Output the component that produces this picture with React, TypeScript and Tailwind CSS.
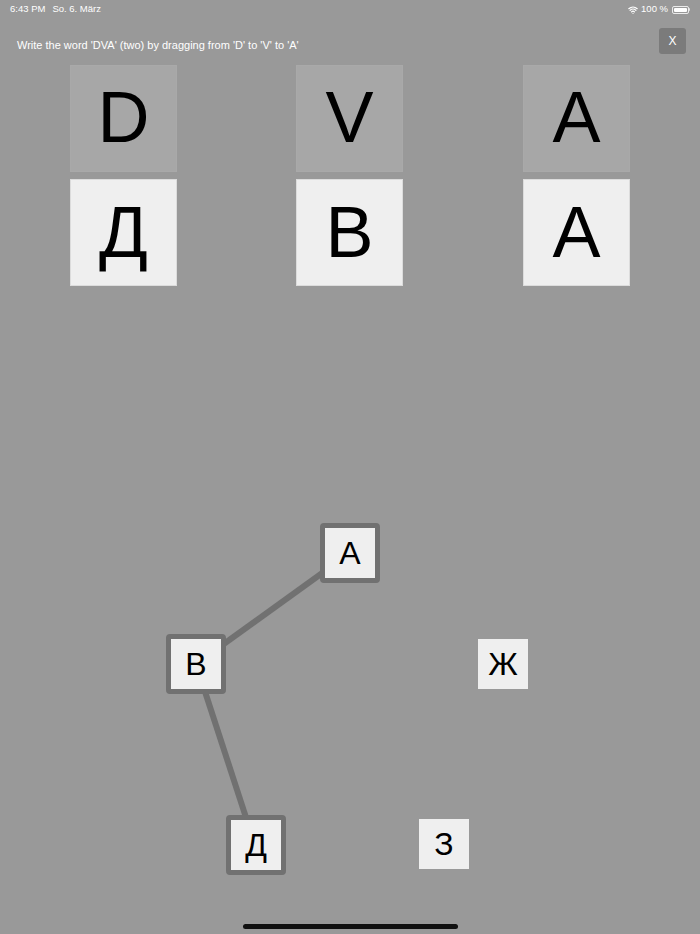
import { Wifi } from "lucide-react";

const PAIRS = [
  { latin: "D", cyr: "Д", x: "left-[70px]" },
  { latin: "V", cyr: "В", x: "left-[296px]" },
  { latin: "A", cyr: "А", x: "left-[523px]" },
];

// nodes on the drawing canvas, position is the content here
const NODES = [
  { ch: "А", cls: "left-[320px] top-[523px]", linked: true },
  { ch: "В", cls: "left-[166px] top-[634px]", linked: true },
  { ch: "Д", cls: "left-[226px] top-[815px]", linked: true },
  { ch: "Ж", cls: "left-[478px] top-[639px]", linked: false },
  { ch: "З", cls: "left-[419px] top-[819px]", linked: false },
];

function StatusBar() {
  return (
    <div className="flex h-[18px] items-center justify-between px-[10px] pt-[1px] text-[9.5px] text-white">
      <div className="flex gap-[7px]">
        <span>6:43 PM</span>
        <span>So. 6. März</span>
      </div>
      <div className="flex items-center gap-[3px]">
        <Wifi size={10} strokeWidth={3} />
        <span>100 %</span>
        <div className="ml-[1px] flex items-center">
          <div className="h-[8px] w-[17px] rounded-[2px] border border-white/80 p-[1px]">
            <div className="h-full w-full rounded-[1px] bg-white" />
          </div>
          <div className="h-[3px] w-[1px] rounded-r bg-white/70" />
        </div>
      </div>
    </div>
  );
}

export default function App() {
  return (
    <div
      className="relative h-[934px] w-[700px] overflow-hidden bg-[#999999]"
      style={{ fontFamily: '"Liberation Sans", Arial, sans-serif' }}
    >
      <StatusBar />

      <div className="flex items-start justify-between pl-[17px] pr-[14px] pt-[10px]">
        <p className="pt-[9px] text-[11px] text-white">
          Write the word 'DVA' (two) by dragging from 'D' to 'V' to 'A'
        </p>
        <button className="flex h-[26px] w-[27px] items-center justify-center rounded-[3px] bg-[#7b7b7b] text-[12px] text-white">
          X
        </button>
      </div>

      {PAIRS.map((p) => (
        <div key={p.latin} className={`absolute top-[65px] flex flex-col gap-[7px] ${p.x}`}>
          <div className="flex h-[107px] w-[107px] items-center justify-center border border-[#a9a9a9] bg-[#a7a7a7] pb-[4px] text-[72px] leading-none text-black">
            {p.latin}
          </div>
          <div className="flex h-[107px] w-[107px] items-center justify-center border border-[#dcdcdc] bg-[#efefef] pb-[2px] text-[72px] leading-none text-black">
            {p.cyr}
          </div>
        </div>
      ))}

      <svg className="absolute left-0 top-0" width="700" height="934">
        <line x1="350" y1="553" x2="196" y2="664" stroke="#717171" strokeWidth="6" />
        <line x1="196" y1="664" x2="255" y2="845" stroke="#717171" strokeWidth="6" />
      </svg>

      {NODES.map((n) => (
        <div
          key={n.ch}
          className={`absolute flex items-center justify-center bg-[#efefef] text-[32px] leading-none text-black ${n.cls} ${
            n.linked ? "h-[60px] w-[60px] rounded-[4px] border-[5px] border-[#717171]" : "h-[50px] w-[50px]"
          }`}
        >
          {n.ch}
        </div>
      ))}

      <div className="absolute bottom-[5px] left-[243px] h-[5px] w-[215px] rounded-full bg-[#111111]" />
    </div>
  );
}
